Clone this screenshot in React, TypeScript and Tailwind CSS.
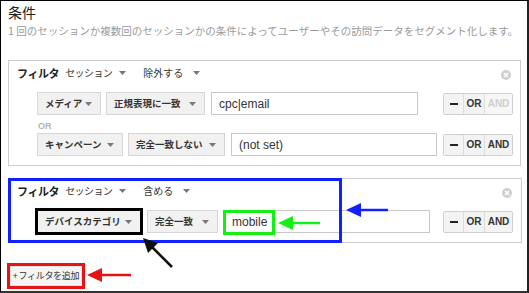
import React from "react";

const jp = { fontFamily: '"Noto Sans CJK JP", "Liberation Sans", sans-serif' };
const latin = { fontFamily: '"Liberation Sans", Arial, sans-serif' };

function Caret({ className = "" }: { className?: string }) {
  return (
    <svg width="7" height="4" viewBox="0 0 7 4" className={`shrink-0 ${className}`}>
      <path d="M0 0 L7 0 L3.5 4 Z" fill="#777" />
    </svg>
  );
}

function CloseIcon() {
  return (
    <svg width="10" height="10" viewBox="0 0 10 10">
      <circle cx="5" cy="5" r="5" fill="#cfcfcf" />
      <path d="M3 3 L7 7 M7 3 L3 7" stroke="#fff" strokeWidth="1.5" />
    </svg>
  );
}

function Select({ label, width, className = "" }: { label: string; width: string; className?: string }) {
  return (
    <div
      className={`h-[23px] ${width} flex items-center justify-between pl-[7px] pr-[8px] bg-[#f1f1f1] border border-[#d6d6d6] text-[9.5px] font-bold text-[#333] whitespace-nowrap shrink-0 ${className}`}
      style={jp}
    >
      <span className="leading-none">{label}</span>
      <Caret />
    </div>
  );
}

function TextBox({ value, width, className = "", children }: { value: string; width: string; className?: string; children?: React.ReactNode }) {
  return (
    <div
      className={`relative h-[23px] ${width} border border-[#c8c8c8] bg-white flex items-center pl-[7px] text-[12px] text-[#333] shrink-0 ${className}`}
      style={latin}
    >
      {value}
      {children}
    </div>
  );
}

function Buttons({ andDisabled = false }: { andDisabled?: boolean }) {
  return (
    <div className="ml-auto flex h-[22px] border border-[#cfcfcf] rounded-[2px] text-[10px] font-bold" style={latin}>
      <div className="w-[20px] flex items-center justify-center bg-[#f3f3f3] border-r border-[#dcdcdc]">
        <div className="w-[8px] h-[2px] bg-[#222]" />
      </div>
      <div className="w-[21px] flex items-center justify-center bg-[#f3f3f3] border-r border-[#dcdcdc] text-[#333]">OR</div>
      <div
        className={`w-[27px] flex items-center justify-center ${andDisabled ? "bg-[#f7f7f7] text-[#cfcfcf]" : "bg-[#f3f3f3] text-[#333]"}`}
      >
        AND
      </div>
    </div>
  );
}

function FilterHeader({ mode }: { mode: string }) {
  return (
    <div className="flex items-center justify-between pl-[8px] pr-[9px] pt-[5px] h-[19px] whitespace-nowrap" style={jp}>
      <div className="flex items-center text-[#222]">
        <span className="text-[11px] font-bold leading-[14px] tracking-[-0.4px]">フィルタ</span>
        <span className="ml-[6px] text-[10px] leading-[14px] tracking-[-0.6px] text-[#333]">セッション</span>
        <Caret className="ml-[7px]" />
        <span className="ml-[17px] text-[10px] leading-[14px] text-[#333]">{mode}</span>
        <Caret className="ml-[10px]" />
      </div>
      <div className="mt-[3px]">
        <CloseIcon />
      </div>
    </div>
  );
}

export default function App() {
  return (
    <div className="relative w-[529px] h-[293px] bg-white border-l border-t border-black border-r-2 border-b-2 border-r-[#222] border-b-[#333] overflow-hidden pl-[7px] pt-[2px]">
      <div className="text-[14px] leading-[18px] text-[#222]" style={jp}>条件</div>
      <div className="mt-[3px] text-[10.5px] leading-[14px] text-[#9a9a9a] whitespace-nowrap" style={jp}>
        1 回のセッションか複数回のセッションかの条件によってユーザーやその訪問データをセグメント化します。
      </div>

      {/* filter 1 */}
      <div className="mt-[22px] w-[513px] h-[106px] border border-[#cccccc]">
        <FilterHeader mode="除外する" />
        <div className="mt-[12px] flex items-center pl-[28px] pr-[7px]">
          <Select label="メディア" width="w-[64px]" />
          <Select label="正規表現に一致" width="w-[99px]" className="ml-[5px]" />
          <TextBox value="cpc|email" width="w-[207px]" className="ml-[6px]" />
          <Buttons andDisabled />
        </div>
        <div className="pl-[29px] mt-[5px] h-[12px] text-[9px] font-bold leading-[12px] text-[#b5b5b5]" style={latin}>
          OR
        </div>
        <div className="mt-[1px] flex items-center pl-[28px] pr-[7px]">
          <Select label="キャンペーン" width="w-[86px]" />
          <Select label="完全一致しない" width="w-[97px]" className="ml-[5px]" />
          <TextBox value="(not set)" width="w-[206px]" className="ml-[6px]" />
          <Buttons />
        </div>
      </div>

      {/* filter 2 */}
      <div className="relative mt-[12px] w-[514px] h-[65px] border border-[#cccccc]">
        <FilterHeader mode="含める" />
        <div className="mt-[12px] flex items-center pl-[28px] pr-[8px]">
          <Select label="デバイスカテゴリ" width="w-[104px]" className="outline-[3px] outline-solid outline-black outline-offset-[-1px]" />
          <Select label="完全一致" width="w-[71px]" className="ml-[6px]" />
          <TextBox value="mobile" width="w-[206px]" className="ml-[6px]">
            <div className="absolute left-[-2px] top-[-1px] w-[52px] h-[25px] border-[3px] border-[#14f014]" />
          </TextBox>
          <Buttons />
        </div>
        <div className="absolute left-[-1px] top-[-1px] w-[334px] h-[65px] border-[3px] border-[#1020ff]" />
      </div>

      <div className="mt-[23px] ml-[2px] w-[72px] h-[20px] flex items-center justify-center bg-[#f4f4f4] border border-[#e2e2e2] outline-[3px] outline-solid outline-[#e41414] text-[9px] tracking-[-0.3px] text-[#333] whitespace-nowrap" style={jp}>
        <span className="mr-[1px]">+</span>フィルタを追加
      </div>

      {/* annotation arrows */}
      <svg className="absolute left-[-1px] top-[-1px] pointer-events-none" width="529" height="293" viewBox="0 0 529 293">
        <line x1="388" y1="210" x2="356" y2="210" stroke="#1020ff" strokeWidth="2.5" />
        <polygon points="346,210 361,203 361,217" fill="#1020ff" />
        <line x1="320" y1="223" x2="288" y2="223" stroke="#14f014" strokeWidth="2.5" />
        <polygon points="278,223 293,216 293,230" fill="#14f014" />
        <line x1="172" y1="267" x2="150" y2="245" stroke="#111" strokeWidth="2.5" />
        <polygon points="143,238 158,243 148,253" fill="#111" />
        <line x1="131" y1="275" x2="96" y2="275" stroke="#e41414" strokeWidth="2.5" />
        <polygon points="87,275 102,268 102,282" fill="#e41414" />
      </svg>
    </div>
  );
}
